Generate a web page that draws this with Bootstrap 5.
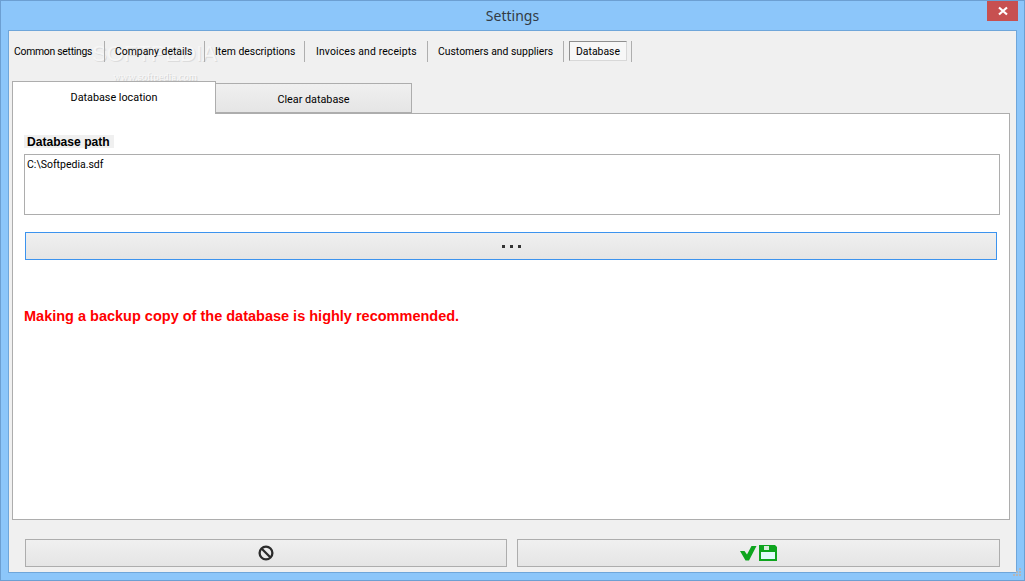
<!DOCTYPE html>
<html lang="en">
<head>
<meta charset="utf-8">
<title>Settings</title>
<link href="https://cdn.jsdelivr.net/npm/bootstrap@5.3.0/dist/css/bootstrap.min.css" rel="stylesheet">
<style>
html,body{height:581px;overflow:hidden;margin:0}
body{font-family:Roboto,"Liberation Sans",Arial,sans-serif;font-size:10.8px;color:#000;background:#8cc6fa}
.win-frame{height:581px;border:1px solid #6c9fd2;background:#8cc6fa;position:relative}
.win-title{height:29px;font-family:"Noto Sans",sans-serif;font-size:14px;color:#333b44;padding-top:4px}
.win-close{position:absolute;top:0;right:6px;width:31px;height:20px;background:#c75050;display:flex;align-items:center;justify-content:center}
.win-client{margin:0 7px;height:543px;background:#f0f0f0;border:1px solid #6fa6da;padding:0 7px 0 3px}
.tool-strip{height:21px;margin-top:10px;align-items:stretch;font-size:10.4px;position:relative;z-index:2}
.tool-item{display:flex;align-items:center;height:21px;line-height:1;padding:1px 0 0 10px;white-space:nowrap}
.tool-first{padding-left:2px;letter-spacing:-.28px}
.tool-wide{padding-left:11px;letter-spacing:.15px}
.tool-sep{width:1px;height:21px;background:#aeaeae}
.tool-box{justify-content:center;padding:3px 0 0;border:1px solid #8f8f8f;border-right-color:#d8d8d8;border-bottom-color:#d8d8d8;background:#f7f7f7;width:58px;height:20px;margin:0 4px 0 5px}
.tab-row{height:33px;margin-top:18px;align-items:flex-end}
.tab-on{width:204px;height:33px;line-height:18px;background:#fff;border:1px solid #adadad;border-bottom:0;margin-bottom:-1px;z-index:1;padding-top:7px;text-align:center;position:relative}
.tab-off{width:196px;height:30px;line-height:18px;border:1px solid #adadad;border-left:0;background:linear-gradient(#f0f0f0,#e5e5e5);text-align:center;padding-top:7px}
.tab-panel{width:998px;height:407px;background:#fff;border:1px solid #adadad;padding:21px 11px 0}
.path-label{background:#f0f0f0;font-family:"Liberation Sans",sans-serif;font-weight:700;font-size:12.1px;height:13px;line-height:14px;padding:0 3px;width:90px;white-space:nowrap}
.path-box{width:976px;height:61px;margin-top:6px;border:1px solid #adadad;padding:3px 2px;line-height:14px;font-size:10.5px}
.dots-btn{--bs-btn-border-color:#3c93ee;display:flex;align-items:center;justify-content:center;gap:5px;width:972px;height:28px;margin:17px 0 0 1px;border:1px solid #3c93ee;background:linear-gradient(#f0f0f0,#e5e5e5);border-radius:0;padding:0}
.dots-btn i{display:block;width:3px;height:3px;background:#333}
.warn-text{margin-top:48px;font-family:"Liberation Sans",sans-serif;color:#f00;font-weight:700;font-size:14.5px;line-height:16px;white-space:nowrap}
.foot-row{margin:19px 0 0 13px;gap:10px}
.foot-btn{display:flex;align-items:center;justify-content:center;height:28px;border:1px solid #adadad;background:linear-gradient(#f0f0f0,#e5e5e5);border-radius:0;padding:0}
.foot-a{width:482px}.foot-b{width:483px;gap:2px}
.soft-mark{position:absolute;left:91px;top:40px;font-family:"Liberation Sans",sans-serif;font-size:22px;line-height:26px;color:#f6f6f6;text-shadow:1px 1px 0 #dcdcdc;pointer-events:none}
.soft-url{position:absolute;left:112px;top:70px;font-family:"Liberation Serif",serif;font-size:10.5px;line-height:12px;color:#f8f8f8;text-shadow:1px 1px 0 #d2d2d2;pointer-events:none}
.grip{position:absolute;right:2px;bottom:2px}
</style>
</head>
<body>
<div class="win-frame">
  <div class="win-title text-center">Settings</div>
  <div class="win-close"><svg width="12" height="10" viewBox="0 0 12 10"><path d="M2 1.5 10 8.5M10 1.5 2 8.5" stroke="#fff" stroke-width="2.2" fill="none"/></svg></div>
  <div class="win-client">
    <div class="tool-strip d-flex">
      <div class="tool-item tool-first" style="width:92px">Common settings</div><div class="tool-sep"></div>
      <div class="tool-item" style="width:99px">Company details</div><div class="tool-sep"></div>
      <div class="tool-item" style="width:99px">Item descriptions</div><div class="tool-sep"></div>
      <div class="tool-item tool-wide" style="width:122px">Invoices and receipts</div><div class="tool-sep"></div>
      <div class="tool-item" style="width:135px">Customers and suppliers</div><div class="tool-sep"></div>
      <div class="tool-item tool-box">Database</div><div class="tool-sep"></div>
    </div>
    <div class="tab-row d-flex">
      <div class="tab-on">Database location</div>
      <div class="tab-off">Clear database</div>
    </div>
    <div class="tab-panel">
      <div class="path-label">Database path</div>
      <div class="path-box">C:\Softpedia.sdf</div>
      <button type="button" class="btn dots-btn"><i></i><i></i><i></i></button>
      <div class="warn-text">Making a backup copy of the database is highly recommended.</div>
    </div>
    <div class="foot-row d-flex">
      <button type="button" class="btn foot-btn foot-a" aria-label="Cancel"><svg width="16" height="16" viewBox="0 0 16 16"><circle cx="8" cy="8" r="6.4" fill="none" stroke="#2b2b2b" stroke-width="2.3"/><path d="M3.5 3.5 12.5 12.5" stroke="#2b2b2b" stroke-width="2.3"/></svg></button>
      <button type="button" class="btn foot-btn foot-b" aria-label="Save"><svg width="17" height="15" viewBox="0 0 17 15"><path d="M0 5H4.5L7 8.5 11.5 0H16.5L9 14.5H5.5Z" fill="#0ea51e"/></svg><svg width="18" height="16" viewBox="0 0 18 16"><path d="M0 0H16L18 2V16H0Z" fill="#0ea51e"/><path d="M2 7H16V14H2Z" fill="#e2fbfb"/><path d="M5 1H10V5H5Z" fill="#d9ecdc"/></svg></button>
    </div>
  </div>
  <div class="soft-mark">SOFTPEDIA</div>
  <div class="soft-url">www.softpedia.com</div>
  <svg class="grip" width="10" height="10" viewBox="0 0 10 10" fill="#b5b5b5"><path d="M7 0h2v2H7zM4 3h2v2H4zM7 3h2v2H7zM1 6h2v2H1zM4 6h2v2H4zM7 6h2v2H7z"/></svg>
</div>
<script src="https://cdn.jsdelivr.net/npm/bootstrap@5.3.0/dist/js/bootstrap.bundle.min.js"></script>
</body>
</html>
